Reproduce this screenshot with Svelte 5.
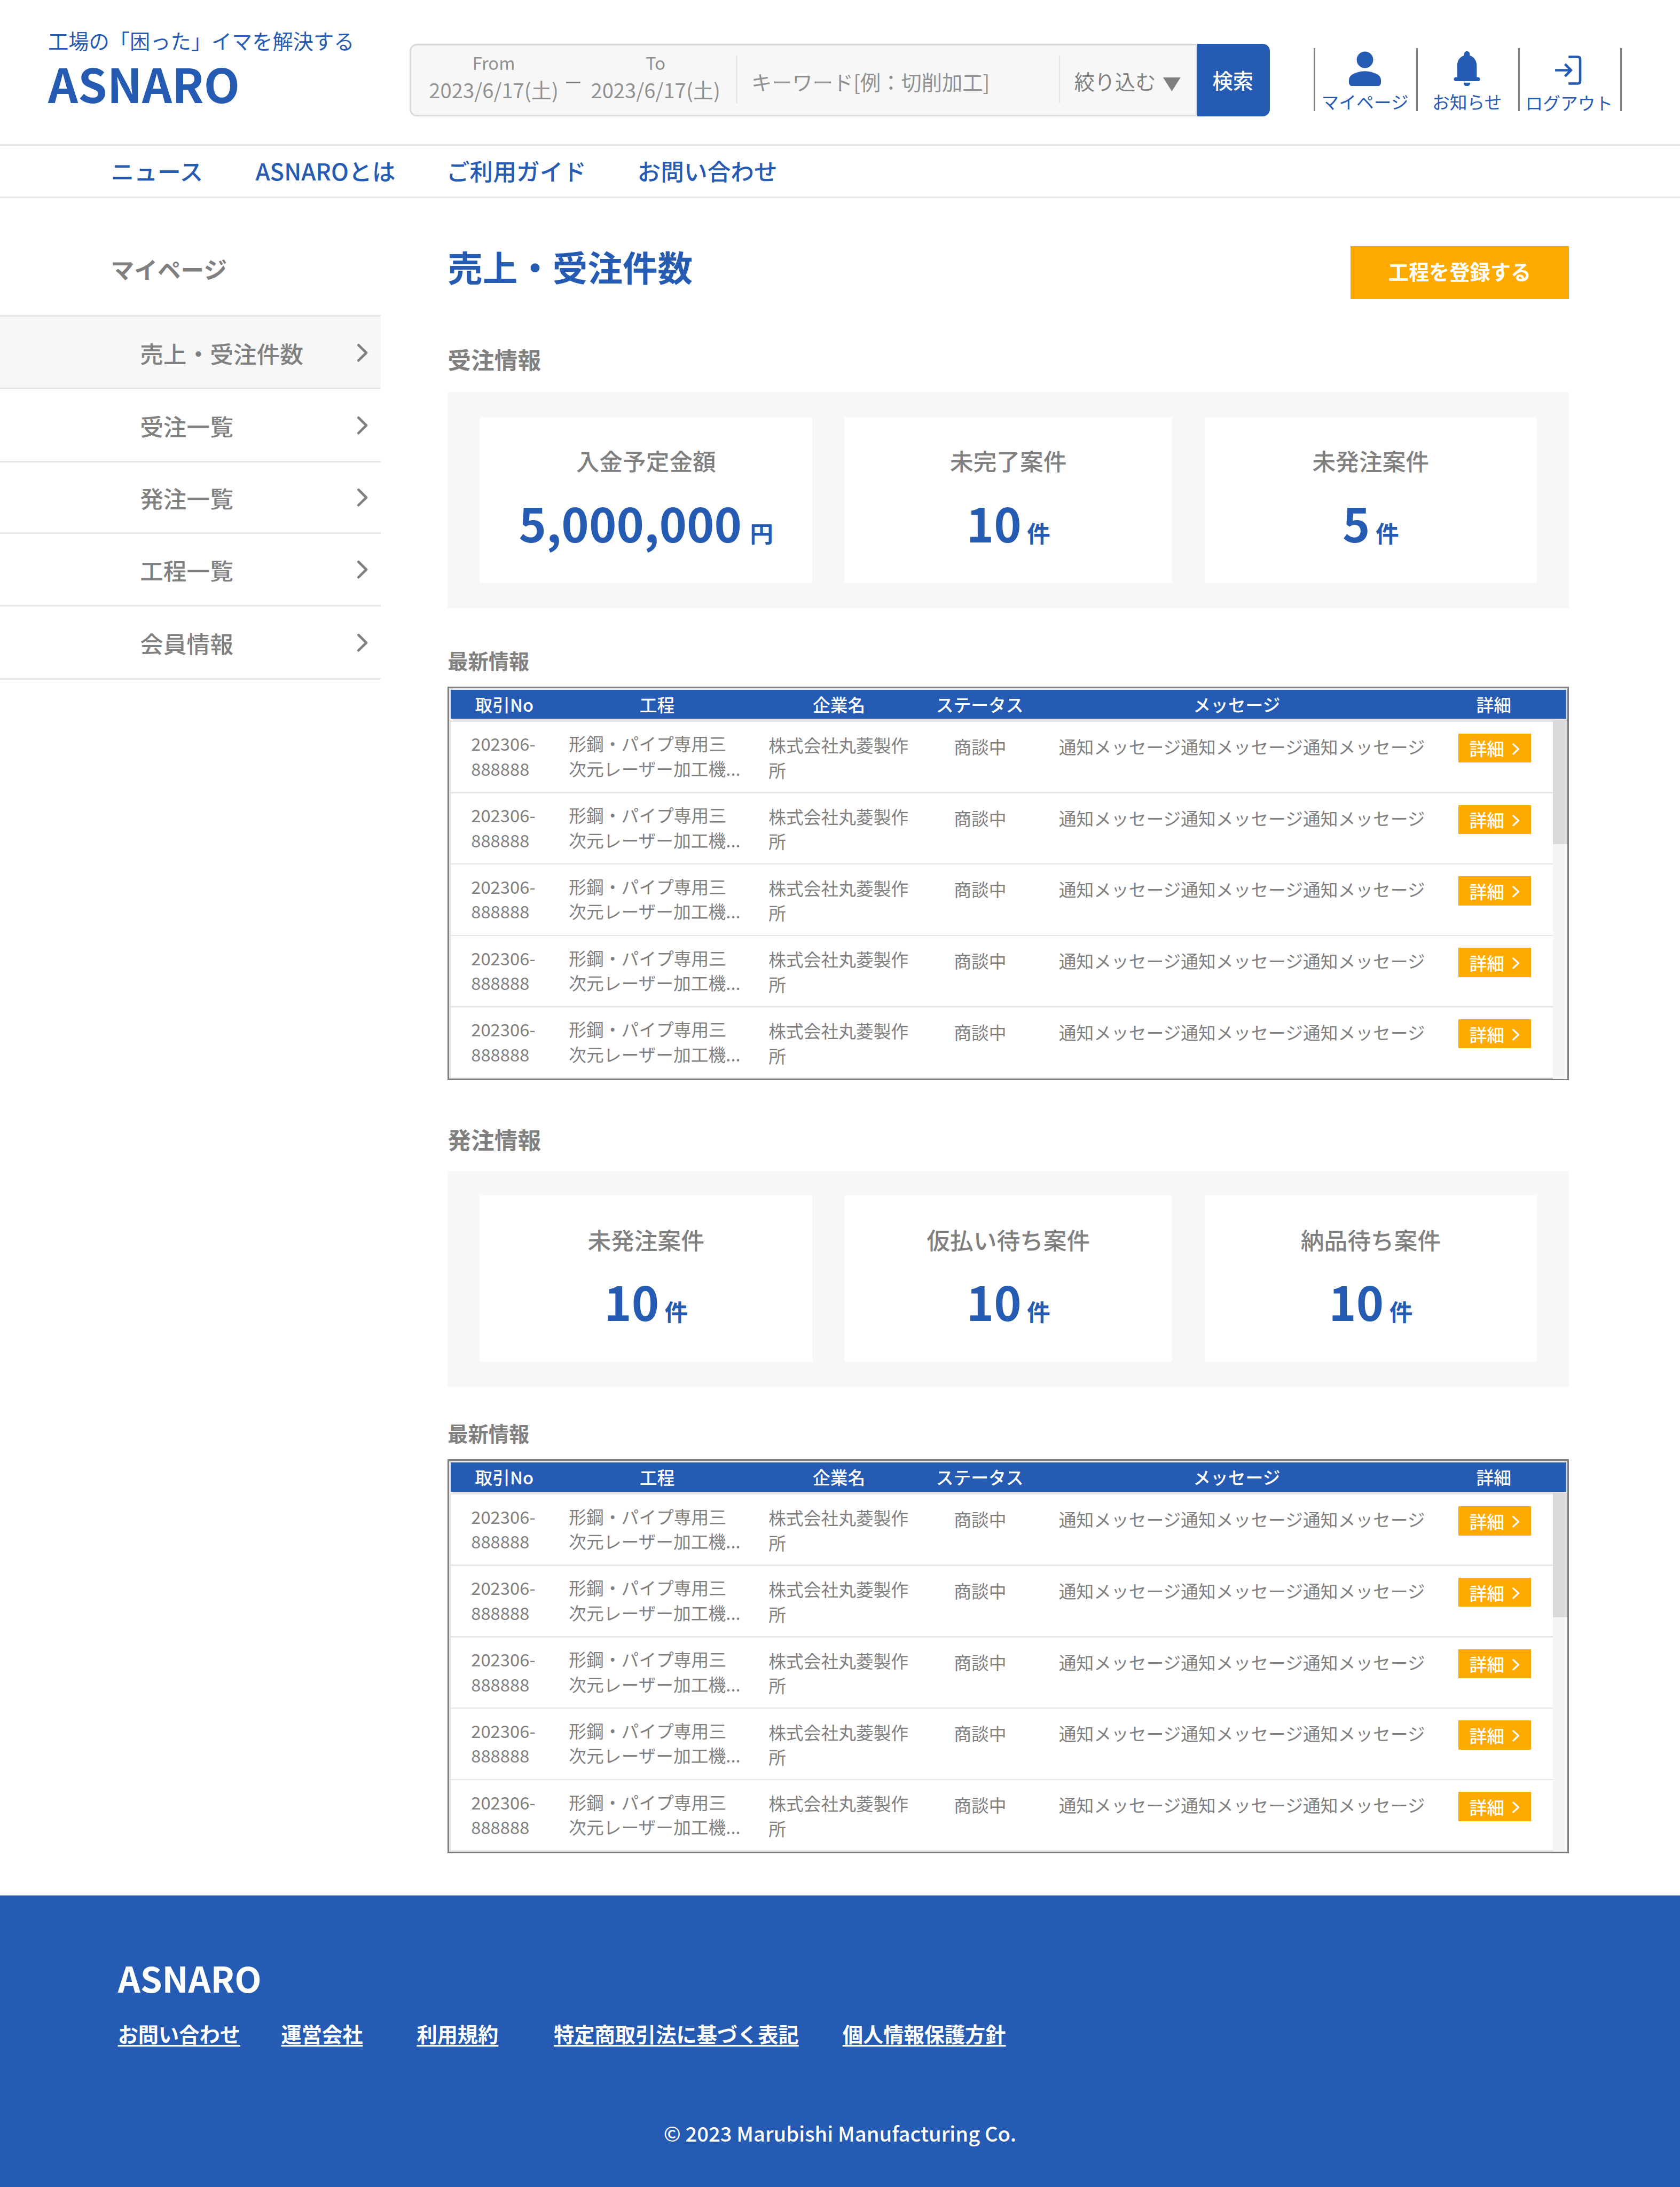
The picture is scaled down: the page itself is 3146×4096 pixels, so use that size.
<script>
  const nav = ['ニュース', 'ASNAROとは', 'ご利用ガイド', 'お問い合わせ'];
  const menu = ['売上・受注件数', '受注一覧', '発注一覧', '工程一覧', '会員情報'];
  const sections = [
    {
      title: '受注情報',
      cards: [
        { label: '入金予定金額', value: '5,000,000', unit: '円' },
        { label: '未完了案件', value: '10', unit: '件' },
        { label: '未発注案件', value: '5', unit: '件' }
      ]
    },
    {
      title: '発注情報',
      cards: [
        { label: '未発注案件', value: '10', unit: '件' },
        { label: '仮払い待ち案件', value: '10', unit: '件' },
        { label: '納品待ち案件', value: '10', unit: '件' }
      ]
    }
  ];
  const columns = ['取引No', '工程', '企業名', 'ステータス', 'メッセージ', '詳細'];
  const rows = Array.from({ length: 5 }, () => ({
    no: ['202306-', '888888'],
    process: ['形鋼・パイプ専用三', '次元レーザー加工機...'],
    company: ['株式会社丸菱製作', '所'],
    status: '商談中',
    message: '通知メッセージ通知メッセージ通知メッセージ'
  }));
  const footerLinks = ['お問い合わせ', '運営会社', '利用規約', '特定商取引法に基づく表記', '個人情報保護方針'];
</script>

<div class="page">
  <header class="top">
    <div class="brand">
      <p class="tagline">工場の「困った」イマを解決する</p>
      <p class="logo">ASNARO</p>
    </div>
    <form class="search">
      <div class="fields">
        <div class="date"><span class="cap">From</span><span>2023/6/17(土)</span></div>
        <i class="dash"></i>
        <div class="date"><span class="cap">To</span><span>2023/6/17(土)</span></div>
        <i class="divider d1"></i>
        <span class="keyword">キーワード[例：切削加工]</span>
        <i class="divider"></i>
        <span class="refine">絞り込む</span>
        <svg class="tri" viewBox="0 0 12 9.5"><path d="M0 0h12L6 9.5z" fill="#808080" /></svg>
      </div>
      <button type="button" class="go">検索</button>
    </form>
    <div class="account">
      <a href="#mypage">
        <svg viewBox="0 0 22 24"><circle cx="11" cy="5.85" r="5.65" /><path d="M11 13.6c3.1 0 5.600.8 8.500 2.200 1.700.9 2.500 2.400 2.500 4.200v1.400c0 1.500-1.100 2.600-2.600 2.600H2.600C1.100 24 0 22.900 0 21.400V20c0-1.800.8-3.300 2.500-4.200 2.900-1.400 5.400-2.200 8.500-2.200z" /></svg>
        <span>マイページ</span>
      </a>
      <a href="#news">
        <svg viewBox="0 0 22 24"><path d="M11 0c1.050 0 1.900.8 1.900 1.900v.9c2.900.9 4.800 3.600 4.800 6.900v8.100h.9c.8 0 1.400.6 1.400 1.400s-.6 1.350-1.400 1.350H3.400c-.8 0-1.400-.6-1.400-1.350s.6-1.400 1.400-1.400h.9V9.700c0-3.300 1.900-6 4.800-6.900v-.9C9.100.8 9.950 0 11 0zM8.700 21.500h4.600c0 1.500-1 2.500-2.300 2.500s-2.300-1-2.300-2.500z" /></svg>
        <span>お知らせ</span>
      </a>
      <a href="#logout" class="out">
        <svg viewBox="0 0 22 24"><path d="M1.500 13h10.600M8.300 8.800l4.100 4.200-4.100 4.200M10.700 3.850h6.300q1.700 0 1.700 1.700v14.900q0 1.700-1.700 1.700h-6.300" fill="none" stroke="#255bb3" stroke-width="1.7" /></svg>
        <span>ログアウト</span>
      </a>
    </div>
  </header>

  <nav class="main-nav">
    {#each nav as item}<a href="#nav">{item}</a>{/each}
  </nav>

  <div class="body">
    <aside>
      <h2>マイページ</h2>
      <ul>
        {#each menu as item, i}
          <li class:active={i === 0} class:short={i === 2}>
            <span>{item}</span>
            <svg viewBox="0 0 8 13"><path d="M1.200 1.200l5.400 5.300-5.400 5.300" /></svg>
          </li>
        {/each}
      </ul>
    </aside>

    <main>
      <div class="title-row">
        <h1>売上・受注件数</h1>
        <button type="button" class="register">工程を登録する</button>
      </div>
      {#each sections as section, n}
        <section class:compact={n > 0}>
          <h3>{section.title}</h3>
          <div class="panel">
            {#each section.cards as card}
              <div class="card">
                <p class="label">{card.label}</p>
                <p class="value">{card.value} <small class:yen={card.unit === '円'}>{card.unit}</small></p>
              </div>
            {/each}
          </div>
          <h4>最新情報</h4>
          <div class="table">
            <div class="thead">
              {#each columns as column}<span>{column}</span>{/each}
            </div>
            <div class="scroll">
              <div class="rows">
                {#each rows as row}
                  <div class="row">
                    <div class="no">{row.no[0]}<br />{row.no[1]}</div>
                    <div class="process">{row.process[0]}<br />{row.process[1]}</div>
                    <div class="company">{row.company[0]}<br />{row.company[1]}</div>
                    <div class="status">{row.status}</div>
                    <div class="message">{row.message}</div>
                    <button type="button" class="detail">詳細<svg viewBox="0 0 5 8"><path d="M.7.7L4.200 4 .7 7.300" /></svg></button>
                  </div>
                {/each}
              </div>
              <div class="track"><div class="thumb"></div></div>
            </div>
          </div>
        </section>
      {/each}
    </main>
  </div>

  <footer>
    <p class="flogo">ASNARO</p>
    <div class="flinks">
      {#each footerLinks as link}<a href="#footer">{link}</a>{/each}
    </div>
    <p class="copy">© 2023 Marubishi Manufacturing Co.</p>
  </footer>
</div>

<style>
  /* 1rem is ten units of the 1152-unit wide layout */
  :global(html) { font-size: 27.3075px; }
  :global(body) { margin: 0; background: #fff; }
  .page {
    --line: 3px;
    width: 115.2rem; height: 150rem; overflow: hidden; display: flex; flex-direction: column;
    font-family: "Noto Sans CJK JP", "Noto Sans", sans-serif; font-size: 1.2rem; color: #808080; line-height: 1.7rem;
  }
  p, h1, h2, h3, h4, ul { margin: 0; padding: 0; }
  ul { list-style: none; }
  a { color: inherit; text-decoration: none; }
  button { border: 0; padding: 0; font: inherit; color: #fff; }
  i, svg { display: block; flex: none; }
  span, a { white-space: nowrap; }

  .top { display: flex; height: 9.9rem; flex: none; color: #255bb3; }
  .brand { width: 24.8rem; padding: 1.8rem 0 0 3.3rem; }
  .tagline { font-size: 1.4rem; line-height: 2rem; }
  .logo { font-size: 3.2rem; line-height: 3.8rem; font-weight: 700; }

  .search { display: flex; width: 59rem; height: 5rem; margin-top: 3rem; flex: none; }
  .fields {
    box-sizing: border-box; width: 54rem; display: flex; padding-left: 1.25rem;
    background: #f7f7f7; border: var(--line) solid #d9d9d9; border-radius: .5rem 0 0 .5rem; color: #919191; font-size: 1.4rem;
  }
  .date { width: 8.8rem; display: flex; flex-direction: column; align-items: center; padding-top: .35rem; line-height: 2rem; }
  .cap { font-size: 1.2rem; line-height: 1.7rem; }
  .dash { width: 1rem; height: .1rem; background: #808080; margin: 2.5rem .75rem 0 .55rem; }
  .divider { width: .1rem; height: 3.3rem; background: #e6e6e6; margin-top: .7rem; }
  .d1 { margin-left: 1.12rem; }
  .keyword { width: 22.03rem; box-sizing: border-box; padding: 1.5rem 0 0 .95rem; line-height: 2rem; }
  .refine { color: #808080; padding: 1.45rem 0 0 .96rem; line-height: 2rem; }
  .tri { width: 1.2rem; height: .95rem; margin: 2.2rem 0 0 .5rem; }
  .go { width: 5rem; padding-right: .1rem; background: #255bb3; border-radius: 0 .5rem .5rem 0; font-size: 1.4rem; font-weight: 500; line-height: 2rem; }

  .account { display: flex; height: 4.3rem; margin: 3.3rem 0 0 3rem; border-right: var(--line) solid #808080; }
  .account a {
    box-sizing: border-box; width: 7rem; border-left: var(--line) solid #808080; padding: .2rem .1rem 0 0;
    display: flex; flex-direction: column; align-items: center; gap: .2rem;
  }
  .account svg { width: 2.2rem; height: 2.4rem; fill: #255bb3; }
  .account .out { gap: .3rem; }

  .main-nav {
    box-sizing: border-box; height: 3.7rem; flex: none; padding: .55rem 0 0 7.6rem; display: flex; gap: 3.5rem;
    border: solid #e6e6e6; border-width: var(--line) 0; color: #255bb3; font-size: 1.6rem; line-height: 2.3rem; font-weight: 500;
  }
  .main-nav a:first-child { margin-right: .1rem; }

  .body { display: flex; height: 116.4rem; flex: none; }
  aside { width: 26.1rem; margin-right: 4.6rem; flex: none; }
  h2 { font-size: 1.6rem; line-height: 2.3rem; padding: 3.7rem 0 2rem 7.6rem; }
  ul { border-top: var(--line) solid #e6e6e6; }
  li {
    box-sizing: border-box; height: 5rem; border-bottom: var(--line) solid #e6e6e6; padding: 0 .85rem 0 9.6rem;
    display: flex; align-items: center; justify-content: space-between; font-size: 1.6rem; font-weight: 500; line-height: 2.3rem;
  }
  li.short { height: 4.9rem; }
  li.active { background: #f7f7f7; }
  li span { padding-top: .1rem; }
  li svg { width: .8rem; height: 1.3rem; margin-top: .05rem; fill: none; stroke: #808080; stroke-width: 1.7; stroke-linecap: round; stroke-linejoin: round; }

  main { width: 76.9rem; padding-top: 3.3rem; }
  .title-row { display: flex; justify-content: space-between; height: 6.6rem; }
  h1 { font-size: 2.4rem; line-height: 2.8rem; color: #255bb3; }
  .register { width: 15rem; height: 3.6rem; padding-bottom: .15rem; background: #fa0; font-size: 1.4rem; font-weight: 700; line-height: 2rem; }
  h3 { font-size: 1.6rem; line-height: 2.2rem; height: 3.4rem; }
  .compact h3 { height: 3.3rem; }
  .panel { box-sizing: border-box; height: 14.8rem; background: #f7f7f7; padding: 1.7rem 2.2rem; display: grid; grid-template-columns: 22.8rem 22.5rem 22.8rem; gap: 2.2rem; }
  .card { background: #fff; text-align: center; padding-top: 1.85rem; }
  .label { font-size: 1.6rem; font-weight: 500; line-height: 2.3rem; }
  .value { font-size: 3.2rem; font-weight: 700; line-height: 4.6rem; margin-top: .8rem; color: #255bb3; word-spacing: -.35rem; }
  small { font-size: 1.6rem; }
  .yen { padding-left: .18rem; }
  h4 { font-size: 1.4rem; line-height: 2rem; height: 2.8rem; padding-top: 2.6rem; }
  .compact h4 { padding-top: 2.2rem; }

  .table { box-sizing: border-box; height: 27rem; border: var(--line) solid #808080; background: #e6e6e6; margin-bottom: 2.9rem; }
  .thead {
    display: grid; grid-template-columns: 7.35rem 13.6rem 11.35rem 7.95rem 27.3rem 7.95rem; height: 2rem; margin: .1rem .1rem 0;
    background: #255bb3; color: #fff; font-weight: 500; line-height: 1.98rem; text-align: center;
  }
  .scroll { display: flex; height: 24.6rem; margin-top: .1rem; }
  .rows { width: 75.7rem; padding: .1rem 0 0 .1rem; box-sizing: border-box; display: flex; flex-direction: column; gap: .1rem; }
  .row {
    display: grid; grid-template-columns: 7.5rem 13.6rem 11.4rem 7.6rem 27.9rem 7.6rem; align-items: start;
    height: 4.8rem; background: #fff; white-space: nowrap; box-sizing: border-box; padding-top: .64rem;
  }
  .no { padding-left: 1.4rem; }
  .process { padding-left: .6rem; }
  .company { padding: .1rem 0 0 .7rem; }
  .status { padding-top: .2rem; text-align: center; }
  .message { padding: .2rem 0 0 1.6rem; }
  .detail { box-sizing: border-box; width: 5rem; height: 2rem; margin: .16rem 0 0 1.1rem; background: #fa0; font-weight: 500; display: flex; align-items: center; padding: .05rem 0 0 .75rem; gap: .55rem; }
  .detail svg { width: .5rem; height: .8rem; margin-top: .08rem; fill: none; stroke: #fff; stroke-width: 1.2; stroke-linecap: round; stroke-linejoin: round; }
  .track { width: 1rem; background: #f5f5f5; }
  .thumb { height: 8.5rem; background: #d9d9d9; }

  footer { flex: 1; background: #255bb3; color: #fff; padding: 3.9rem 0 0 8.08rem; }
  .flogo { font-size: 2.4rem; font-weight: 700; line-height: 3.5rem; }
  .flinks {
    display: grid; grid-template-columns: 11.2rem 9.3rem 9.4rem 19.8rem auto; justify-content: start;
    margin-top: 1.1rem; font-size: 1.4rem; font-weight: 700; line-height: 2rem;
  }
  .flinks a { text-decoration: underline; text-decoration-thickness: .1rem; text-underline-offset: .2rem; text-decoration-skip-ink: none; }
  .copy { font-size: 1.4rem; font-weight: 500; line-height: 2rem; margin: 4.8rem 8.08rem 0 0; text-align: center; }
</style>
